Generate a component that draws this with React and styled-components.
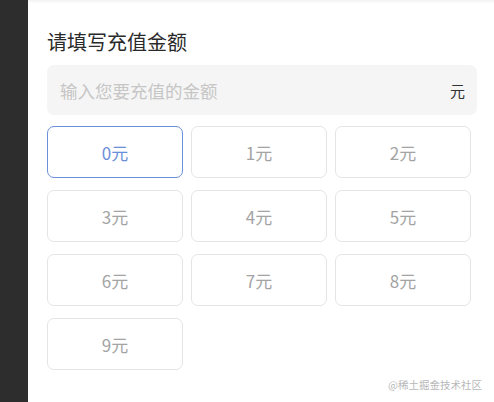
import React, { useState } from "react";
import styled, { createGlobalStyle } from "styled-components";

const Global = createGlobalStyle`
  html, body { margin: 0; padding: 0; background: #fff; }
  body { font-family: "Microsoft YaHei", "Noto Sans CJK SC", "Liberation Sans", sans-serif; }
`;

const Page = styled.div`
  display: flex;
  width: 494px;
  height: 402px;
  overflow: hidden;
`;

const Side = styled.div`
  width: 28px;
  flex: none;
  background: #2d2d2d;
`;

const Main = styled.div`
  flex: 1;
  position: relative;
  display: flex;
  flex-direction: column;
  padding: 28px 17px 0 19px;
  background: linear-gradient(#f2f2f2 0, #fafafa 2px, #fff 4px);
`;

const Title = styled.div`
  font-size: 20px;
  line-height: 27px;
  color: #2a2a2a;
  font-family: "Noto Sans CJK SC", sans-serif;
  font-weight: 400;
`;

const InputBox = styled.div`
  margin-top: 10px;
  height: 50px;
  background: #f5f5f5;
  border-radius: 7px;
  display: flex;
  align-items: center;
  padding: 0 12px 0 13px;
  box-sizing: border-box;
`;

const Placeholder = styled.div`
  flex: 1;
  color: #c6c6c6;
  font-size: 17.5px;
  font-family: "Noto Sans CJK SC", sans-serif;
`;

const Unit = styled.div`
  color: #333;
  font-size: 15px;
  font-family: "Noto Sans CJK SC", sans-serif;
`;

const Grid = styled.div`
  margin-top: 11px;
  display: grid;
  grid-template-columns: repeat(3, 136px);
  column-gap: 8px;
  row-gap: 12px;
`;

const Amount = styled.div`
  height: 52px;
  box-sizing: border-box;
  border: 1px solid ${(p) => (p.$active ? "#6b8ed9" : "#e4e4e4")};
  border-radius: 7px;
  display: flex;
  align-items: center;
  justify-content: center;
  color: ${(p) => (p.$active ? "#6b8ed9" : "#a4a4a4")};
  font-size: 17px;
  font-family: "Noto Sans CJK SC", sans-serif;
  cursor: pointer;
`;

const Watermark = styled.div`
  position: absolute;
  right: 12px;
  bottom: 10px;
  font-size: 10.5px;
  color: #b8b8b8;
  font-family: "Noto Sans CJK SC", sans-serif;
`;

export default function App() {
  const [sel, setSel] = useState(0);
  const amounts = [0, 1, 2, 3, 4, 5, 6, 7, 8, 9];
  return (
    <>
      <Global />
      <Page>
        <Side />
        <Main>
          <Title>请填写充值金额</Title>
          <InputBox>
            <Placeholder>输入您要充值的金额</Placeholder>
            <Unit>元</Unit>
          </InputBox>
          <Grid>
            {amounts.map((a) => (
              <Amount key={a} $active={a === sel} onClick={() => setSel(a)}>
                {a}元
              </Amount>
            ))}
          </Grid>
          <Watermark>@稀土掘金技术社区</Watermark>
        </Main>
      </Page>
    </>
  );
}
